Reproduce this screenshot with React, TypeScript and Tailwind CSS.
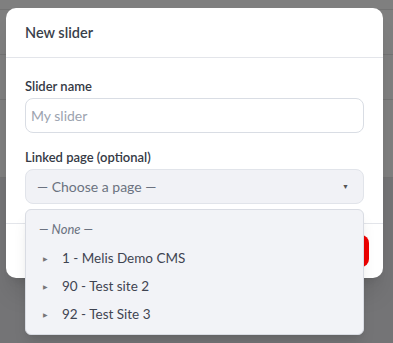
import React from 'react';

const rows = [10, 45, 45, 78];

const App: React.FC = () => {
  return (
    <div className="relative w-[393px] h-[343px] overflow-hidden bg-[#e8e9ec] font-['Lato','Open_Sans',sans-serif]">
      {/* page underneath */}
      <div className="bg-white">
        {rows.map((h, i) => (
          <div key={i} style={{ height: h }} className="border-b border-[#e6e6e6]" />
        ))}
      </div>

      {/* overlay */}
      <div className="absolute inset-0 bg-black/50 pl-[6px] pt-[8px]">
        <div className="w-[377px] bg-white rounded-[10px] shadow-xl">
          <div className="h-[50px] flex items-center px-[19px] border-b border-[#e3e5ea]">
            <h2 className="text-[14.5px] font-semibold text-[#3a3f4b]">New slider</h2>
          </div>

          <div className="px-[19px] pt-[20px] pb-[19px]">
            <label className="block text-[13px] leading-4 font-semibold text-[#353a45] mb-[4px]">Slider name</label>
            <input
              placeholder="My slider"
              className="w-full h-[35px] rounded-[8px] border border-[#d9dde4] px-[5px] text-[14px] text-[#374151] placeholder:text-[#9ca3af] outline-none"
            />

            <label className="block text-[13px] leading-4 font-semibold text-[#353a45] mt-[16px] mb-[4px]">
              Linked page (optional)
            </label>
            <div className="relative">
              <div className="h-[35px] rounded-[8px] border border-[#e1e4ea] bg-[#f1f2f6] flex items-center justify-between pl-[11px] pr-[14px]">
                <span className="text-[14px] text-[#6b7280]">— Choose a page —</span>
                <span className="text-[7px] text-[#555]">▼</span>
              </div>

              {/* dropdown menu */}
              <div className="absolute left-0 right-0 top-[40px] z-10 rounded-[6px] border border-[#d9dce3] bg-[#f2f3f7] py-[6px] shadow-lg">
                <div className="h-7 flex items-center pl-[13px] text-[13px] italic text-[#6b7280]">— None —</div>
                {['1 - Melis Demo CMS', '90 - Test site 2', '92 - Test Site 3'].map((t) => (
                  <div key={t} className="h-7 flex items-center pl-[17px] text-[13.5px] text-[#3f4451]">
                    <span className="text-[6px] text-[#777] w-[19px]">▶</span>
                    <span>{t}</span>
                  </div>
                ))}
              </div>
            </div>
          </div>

          <div className="border-t border-[#e3e5ea] h-[55px] flex items-center justify-end gap-2 pr-[14px]">
            <button className="h-[32px] px-4 rounded-[8px] border border-[#d9dde4] text-[13px] text-[#374151]">Cancel</button>
            <button className="h-[32px] px-5 rounded-[8px] bg-[#f00000] text-[13px] font-semibold text-white">Create</button>
          </div>
        </div>
      </div>
    </div>
  );
};

export default App;
